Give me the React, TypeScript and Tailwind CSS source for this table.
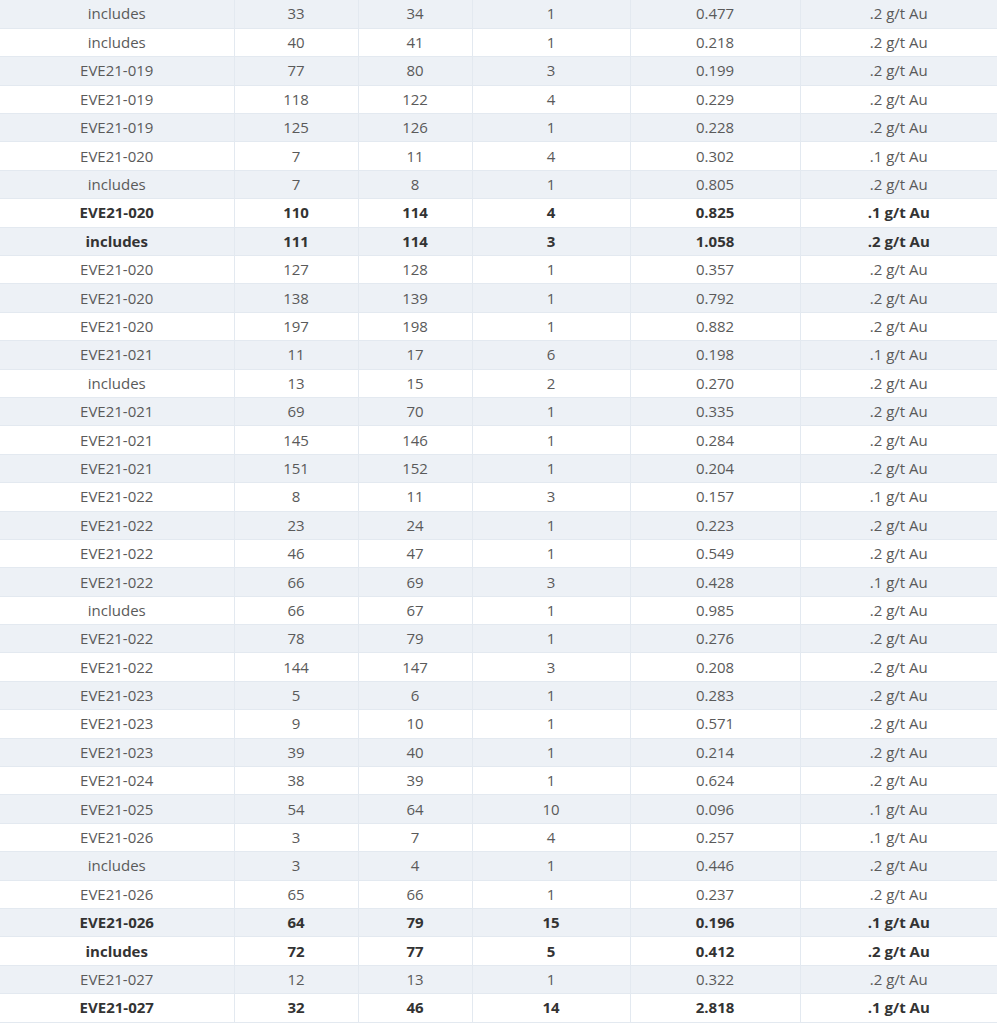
type Row = [string, string, string, string, string, string, boolean?]

const rows: Row[] = [
  ['includes', '33', '34', '1', '0.477', '.2 g/t Au'],
  ['includes', '40', '41', '1', '0.218', '.2 g/t Au'],
  ['EVE21-019', '77', '80', '3', '0.199', '.2 g/t Au'],
  ['EVE21-019', '118', '122', '4', '0.229', '.2 g/t Au'],
  ['EVE21-019', '125', '126', '1', '0.228', '.2 g/t Au'],
  ['EVE21-020', '7', '11', '4', '0.302', '.1 g/t Au'],
  ['includes', '7', '8', '1', '0.805', '.2 g/t Au'],
  ['EVE21-020', '110', '114', '4', '0.825', '.1 g/t Au', true],
  ['includes', '111', '114', '3', '1.058', '.2 g/t Au', true],
  ['EVE21-020', '127', '128', '1', '0.357', '.2 g/t Au'],
  ['EVE21-020', '138', '139', '1', '0.792', '.2 g/t Au'],
  ['EVE21-020', '197', '198', '1', '0.882', '.2 g/t Au'],
  ['EVE21-021', '11', '17', '6', '0.198', '.1 g/t Au'],
  ['includes', '13', '15', '2', '0.270', '.2 g/t Au'],
  ['EVE21-021', '69', '70', '1', '0.335', '.2 g/t Au'],
  ['EVE21-021', '145', '146', '1', '0.284', '.2 g/t Au'],
  ['EVE21-021', '151', '152', '1', '0.204', '.2 g/t Au'],
  ['EVE21-022', '8', '11', '3', '0.157', '.1 g/t Au'],
  ['EVE21-022', '23', '24', '1', '0.223', '.2 g/t Au'],
  ['EVE21-022', '46', '47', '1', '0.549', '.2 g/t Au'],
  ['EVE21-022', '66', '69', '3', '0.428', '.1 g/t Au'],
  ['includes', '66', '67', '1', '0.985', '.2 g/t Au'],
  ['EVE21-022', '78', '79', '1', '0.276', '.2 g/t Au'],
  ['EVE21-022', '144', '147', '3', '0.208', '.2 g/t Au'],
  ['EVE21-023', '5', '6', '1', '0.283', '.2 g/t Au'],
  ['EVE21-023', '9', '10', '1', '0.571', '.2 g/t Au'],
  ['EVE21-023', '39', '40', '1', '0.214', '.2 g/t Au'],
  ['EVE21-024', '38', '39', '1', '0.624', '.2 g/t Au'],
  ['EVE21-025', '54', '64', '10', '0.096', '.1 g/t Au'],
  ['EVE21-026', '3', '7', '4', '0.257', '.1 g/t Au'],
  ['includes', '3', '4', '1', '0.446', '.2 g/t Au'],
  ['EVE21-026', '65', '66', '1', '0.237', '.2 g/t Au'],
  ['EVE21-026', '64', '79', '15', '0.196', '.1 g/t Au', true],
  ['includes', '72', '77', '5', '0.412', '.2 g/t Au', true],
  ['EVE21-027', '12', '13', '1', '0.322', '.2 g/t Au'],
  ['EVE21-027', '32', '46', '14', '2.818', '.1 g/t Au', true],
]

export default function App() {
  return (
    <div className="w-[997px] bg-white overflow-hidden font-['Open_Sans',sans-serif] text-[15px]">
      <table className="w-[997px] table-fixed border-collapse">
        <colgroup>
          <col className="w-[234px]" />
          <col className="w-[124px]" />
          <col className="w-[114px]" />
          <col className="w-[158px]" />
          <col className="w-[170px]" />
          <col />
        </colgroup>
        <tbody>
          {rows.map((r, i) => (
            <tr
              key={i}
              className={`h-[28.4px] border-b border-[#e3e9f0] ${i % 2 === 0 ? 'bg-[#edf1f6]' : 'bg-white'} ${
                r[6] ? 'font-bold text-[#333333]' : 'text-[#5a5a5a]'
              }`}
            >
              {r.slice(0, 6).map((c, j) => (
                <td
                  key={j}
                  className={`p-0 text-center leading-none ${j < 5 ? 'border-r border-[#e3e9f0]' : ''}`}
                >
                  {c as string}
                </td>
              ))}
            </tr>
          ))}
        </tbody>
      </table>
    </div>
  )
}
